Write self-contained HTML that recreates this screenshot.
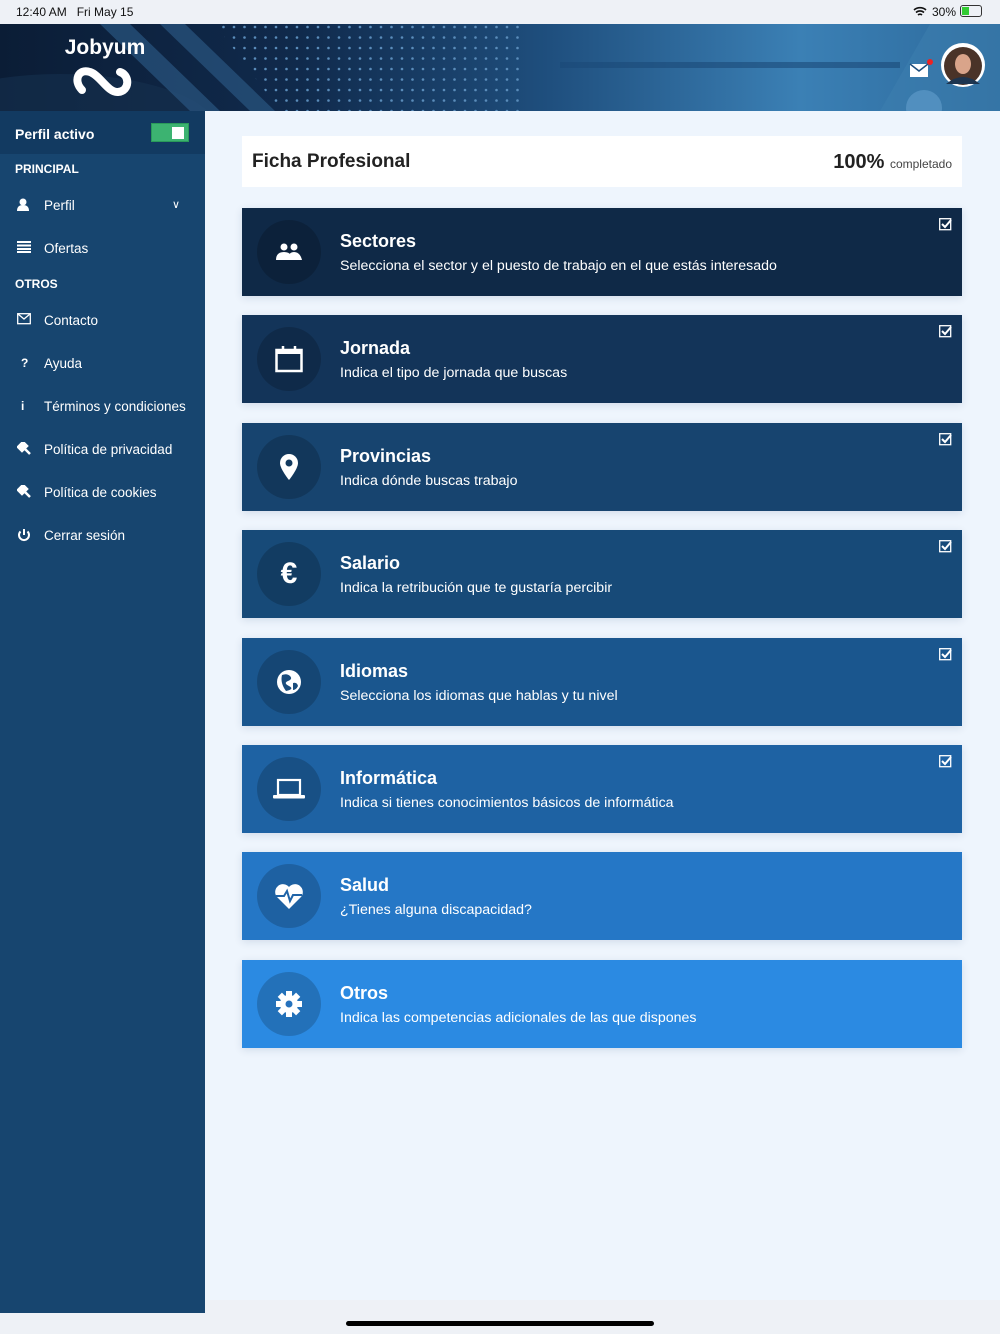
<!DOCTYPE html>
<html><head><meta charset="utf-8"><style>
*{margin:0;padding:0;box-sizing:border-box}
body{width:1000px;height:1334px;overflow:hidden;background:#eef1f6;font-family:"Liberation Sans",sans-serif;position:relative}
.status{position:absolute;top:0;left:0;width:1000px;height:24px;background:#eef1f6;font-size:12px;color:#111}
.header{position:absolute;top:24px;left:0;width:1000px;height:87px}
.side{position:absolute;top:111px;left:0;width:205px;height:1202px;background:#17456f;color:#fff}
.main{position:absolute;top:111px;left:205px;width:795px;height:1189px;background:#eef5fd}
.pa{height:43px;background:#123a61;font-size:14px;font-weight:bold;padding:15px 0 0 15px;position:relative}
.tog{position:absolute;left:151px;top:12px;width:38px;height:19px;background:#3cb371;border:1px solid #2a9a5a}
.tog:after{content:"";position:absolute;right:4px;top:3px;width:12px;height:12px;background:#fff}
.sec{font-size:12px;font-weight:bold;padding-left:15px;height:29px;line-height:30px}
.item{height:43px;line-height:45px;font-size:13.5px;position:relative;padding-left:44px}
.item svg{position:absolute;left:17px;top:15px}
.ficha{position:absolute;left:37px;top:25px;width:720px;height:51px;background:#fff;color:#222}
.card{position:absolute;left:37px;width:720px;height:88px;color:#fff;box-shadow:0 2px 8px rgba(0,40,90,.12)}
.card .c{position:absolute;left:15px;top:12px;width:64px;height:64px;border-radius:50%;background:rgba(0,0,0,.18);display:flex;align-items:center;justify-content:center}
.card h3{position:absolute;left:98px;top:23px;font-size:18px;font-weight:bold}
.card p{position:absolute;left:98px;top:50px;font-size:14.2px}
.card .ck{position:absolute;right:10px;top:10px}
</style></head><body>
<div class="status"><span style="position:absolute;left:16px;top:5px">12:40 AM&nbsp;&nbsp; Fri May 15</span>
<span style="position:absolute;right:44px;top:5px">30%</span>
<svg style="position:absolute;left:913px;top:6px" width="14" height="11" viewBox="0 0 14 11"><path d="M1 4a9 9 0 0 1 12 0M3 6.5a6 6 0 0 1 8 0M5 9a3 3 0 0 1 4 0" stroke="#111" stroke-width="1.6" fill="none"/></svg>
<div style="position:absolute;left:960px;top:5px;width:22px;height:12px;border:1px solid #333;border-radius:3px"><div style="width:7px;height:8px;margin:1px;background:#3c3"></div></div></div>
<div class="header"><svg width="1000" height="87">
<defs><linearGradient id="g" x1="0" x2="1"><stop offset="0" stop-color="#0b1d36"/><stop offset=".3" stop-color="#102a4c"/><stop offset=".55" stop-color="#1f4f7e"/><stop offset=".8" stop-color="#3b80b5"/><stop offset="1" stop-color="#2d6a9c"/></linearGradient>
<pattern id="d" width="10.5" height="10.5" patternUnits="userSpaceOnUse"><circle cx="3" cy="3" r="1.3" fill="#5a8cba"/></pattern></defs>
<rect width="1000" height="87" fill="url(#g)"/>
<ellipse cx="60" cy="110" rx="160" ry="60" fill="#15304f" opacity=".6"/>
<polygon points="100,0 130,0 220,87 190,87" fill="#2a5580" opacity=".7"/>
<polygon points="160,0 185,0 275,87 250,87" fill="#2a5580" opacity=".7"/>
<polygon points="215,0 520,0 520,87 280,87" fill="url(#d)"/>
<rect x="560" y="38" width="340" height="6" fill="#1b4a78" opacity=".6"/>
<polygon points="930,0 1000,0 1000,87 880,87" fill="#3e7fb0" opacity=".5"/>
<circle cx="924" cy="84" r="18" fill="#5c98c8" opacity=".7"/>
<text x="105" y="30" fill="#fff" font-size="21" font-weight="bold" text-anchor="middle" font-family="Liberation Sans">Jobyum</text>
<path d="M82 66c-9-9 -4-22 8-18 10 3 18 21 28 20 12-1 12-17 2-20" stroke="#fff" stroke-width="8" fill="none" stroke-linecap="round"/>
<rect x="910" y="40" width="18" height="13" fill="#fff"/><path d="M910 40l9 7 9-7" stroke="#1f4f7e" fill="none" stroke-width="1.5"/>
<circle cx="930" cy="38" r="3" fill="#e22"/>
<circle cx="963" cy="41" r="22" fill="#fff"/><circle cx="963" cy="42" r="19" fill="#4a3328"/><ellipse cx="963" cy="40" rx="8" ry="10" fill="#d9a48a"/><path d="M946 60q17-14 34 0" fill="#1d3550"/>
</svg></div>
<div class="side">
<div class="pa">Perfil activo<div class="tog"></div></div>
<div class="sec">PRINCIPAL</div>
<div class="item"><svg width="12" height="14"><circle cx="6" cy="4" r="3.5" fill="#fff"/><path d="M0 13q0-6 6-6t6 6z" fill="#fff"/></svg>Perfil<span style="position:absolute;left:172px;top:0;font-size:11px">&#x2228;</span></div>
<div class="item"><svg width="14" height="12"><path d="M0 1h14M0 4.5h14M0 8h14M0 11h14" stroke="#fff" stroke-width="2"/></svg>Ofertas</div>
<div class="sec">OTROS</div>
<div class="item"><svg width="14" height="12"><rect x=".7" y=".7" width="12.6" height="10" fill="none" stroke="#fff" stroke-width="1.3"/><path d="M1 1l6 5 6-5" stroke="#fff" fill="none" stroke-width="1.3"/></svg>Contacto</div>
<div class="item"><svg width="14" height="14"><text x="4" y="11" fill="#fff" font-size="12" font-weight="bold">?</text></svg>Ayuda</div>
<div class="item"><svg width="14" height="14"><text x="4" y="11" fill="#fff" font-size="12" font-weight="bold">i</text></svg>Términos y condiciones</div>
<div class="item"><svg width="14" height="14"><path d="M1 5l5-5 4 4-5 5zM7 6l6 6" stroke="#fff" stroke-width="2.5" fill="#fff"/></svg>Política de privacidad</div>
<div class="item"><svg width="14" height="14"><path d="M1 5l5-5 4 4-5 5zM7 6l6 6" stroke="#fff" stroke-width="2.5" fill="#fff"/></svg>Política de cookies</div>
<div class="item"><svg width="14" height="14"><path d="M3.5 3.5a5 5 0 1 0 7 0M7 1v6" stroke="#fff" stroke-width="2" fill="none"/></svg>Cerrar sesión</div>
</div>
<div class="main">
<div class="ficha"><span style="position:absolute;left:10px;top:15px;font-size:19px;font-weight:bold">Ficha Profesional</span><span style="position:absolute;right:10px;top:15px;font-size:20px;font-weight:bold">100% <span style="font-size:12px;font-weight:normal;color:#444">completado</span></span></div>

<div class="card" style="top:97px;background:#0f2947"><div class="c"><svg width="26" height="18"><circle cx="8" cy="4" r="3.5" fill="#fff"/><circle cx="18" cy="4" r="3.5" fill="#fff"/><path d="M0 17q0-8 8-8t8 8zM12 17q0-8 6-8t8 8z" fill="#fff"/></svg></div><h3>Sectores</h3><p>Selecciona el sector y el puesto de trabajo en el que estás interesado</p><svg class="ck" width="13" height="13"><rect x=".7" y=".7" width="11" height="11" fill="none" stroke="#fff" stroke-width="1.3"/><path d="M3 6l3 3 6-7" stroke="#fff" stroke-width="2" fill="none"/></svg></div>

<div class="card" style="top:204px;background:#133459"><div class="c"><svg width="28" height="28"><rect x="1.5" y="5" width="25" height="21" fill="none" stroke="#fff" stroke-width="2.5"/><rect x="1.5" y="5" width="25" height="4" fill="#fff"/><path d="M8 1v7M20 1v7" stroke="#fff" stroke-width="2.5"/></svg></div><h3>Jornada</h3><p>Indica el tipo de jornada que buscas</p><svg class="ck" width="13" height="13"><rect x=".7" y=".7" width="11" height="11" fill="none" stroke="#fff" stroke-width="1.3"/><path d="M3 6l3 3 6-7" stroke="#fff" stroke-width="2" fill="none"/></svg></div>

<div class="card" style="top:312px;background:#17446f"><div class="c"><svg width="18" height="26"><path d="M9 0a9 9 0 0 1 9 9c0 6-9 17-9 17S0 15 0 9a9 9 0 0 1 9-9z" fill="#fff"/><circle cx="9" cy="9" r="3.5" fill="#133a5f"/></svg></div><h3>Provincias</h3><p>Indica dónde buscas trabajo</p><svg class="ck" width="13" height="13"><rect x=".7" y=".7" width="11" height="11" fill="none" stroke="#fff" stroke-width="1.3"/><path d="M3 6l3 3 6-7" stroke="#fff" stroke-width="2" fill="none"/></svg></div>

<div class="card" style="top:419px;background:#174a78"><div class="c"><span style="font-size:30px;font-weight:bold">€</span></div><h3>Salario</h3><p>Indica la retribución que te gustaría percibir</p><svg class="ck" width="13" height="13"><rect x=".7" y=".7" width="11" height="11" fill="none" stroke="#fff" stroke-width="1.3"/><path d="M3 6l3 3 6-7" stroke="#fff" stroke-width="2" fill="none"/></svg></div>

<div class="card" style="top:527px;background:#1a568e"><div class="c"><svg width="26" height="26"><circle cx="13" cy="13" r="12" fill="#fff"/><path d="M6 6q5-2 8 1t-2 5 1 5-3 5q-3-4-4-8t0-8zM17 14q4-1 5 3-2 4-5 4z" fill="#1a4c7c"/></svg></div><h3>Idiomas</h3><p>Selecciona los idiomas que hablas y tu nivel</p><svg class="ck" width="13" height="13"><rect x=".7" y=".7" width="11" height="11" fill="none" stroke="#fff" stroke-width="1.3"/><path d="M3 6l3 3 6-7" stroke="#fff" stroke-width="2" fill="none"/></svg></div>

<div class="card" style="top:634px;background:#1e62a3"><div class="c"><svg width="32" height="22"><rect x="5" y="2" width="22" height="15" fill="none" stroke="#fff" stroke-width="2.2"/><rect x="0" y="17" width="32" height="3.5" rx="1" fill="#fff"/></svg></div><h3>Informática</h3><p>Indica si tienes conocimientos básicos de informática</p><svg class="ck" width="13" height="13"><rect x=".7" y=".7" width="11" height="11" fill="none" stroke="#fff" stroke-width="1.3"/><path d="M3 6l3 3 6-7" stroke="#fff" stroke-width="2" fill="none"/></svg></div>

<div class="card" style="top:741px;background:#2577c6"><div class="c"><svg width="30" height="26"><path d="M15 26L3 14A7.5 7.5 0 0 1 15 4a7.5 7.5 0 0 1 12 10z" fill="#fff"/><path d="M2 13h8l3-5 3 10 3-6h9" stroke="#1f64a8" stroke-width="2" fill="none"/></svg></div><h3>Salud</h3><p>¿Tienes alguna discapacidad?</p></div>

<div class="card" style="top:849px;background:#2b8ae2"><div class="c"><svg width="26" height="26" viewBox="-13 -13 26 26"><g fill="#fff"><circle r="9"/><rect x="-3" y="-13" width="6" height="26"/><rect x="-3" y="-13" width="6" height="26" transform="rotate(45)"/><rect x="-3" y="-13" width="6" height="26" transform="rotate(90)"/><rect x="-3" y="-13" width="6" height="26" transform="rotate(135)"/></g><circle r="3.5" fill="#2672bd"/></svg></div><h3>Otros</h3><p>Indica las competencias adicionales de las que dispones</p></div>
</div>
<div style="position:absolute;left:346px;top:1321px;width:308px;height:5px;border-radius:3px;background:#000"></div>
</body></html>
